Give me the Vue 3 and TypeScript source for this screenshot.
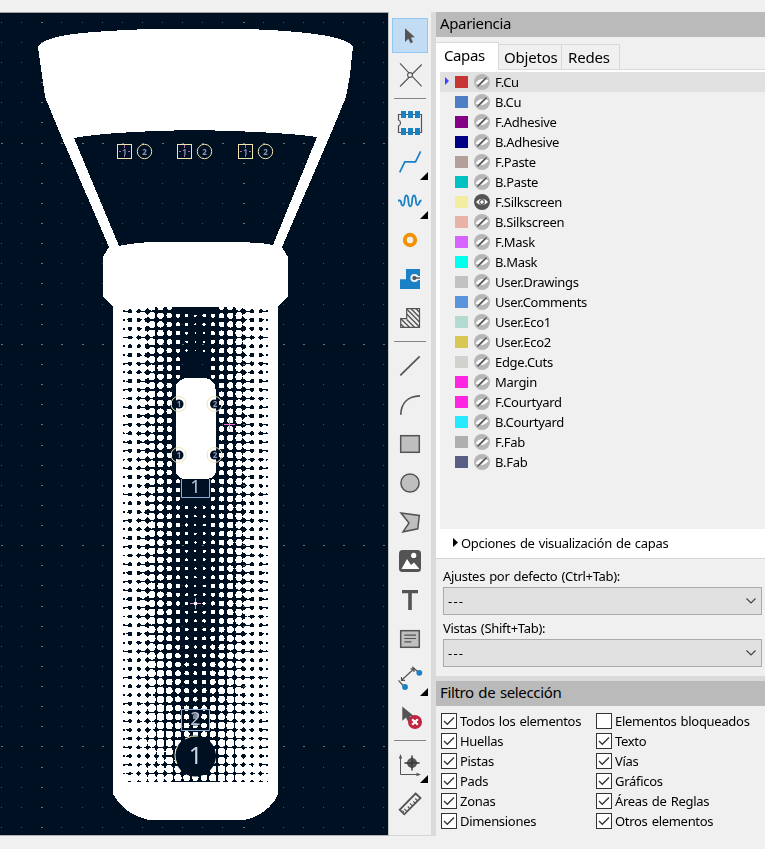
<script setup lang="ts">
interface Layer { name: string; color: string; visible?: boolean }
interface Dot { x: number; y: number; rx: number; ry: number }

const layers: Layer[] = [
  { name: 'F.Cu', color: '#c83434' },
  { name: 'B.Cu', color: '#4d7fc4' },
  { name: 'F.Adhesive', color: '#840084' },
  { name: 'B.Adhesive', color: '#000084' },
  { name: 'F.Paste', color: '#b4a09a' },
  { name: 'B.Paste', color: '#00c2c2' },
  { name: 'F.Silkscreen', color: '#f2eda1', visible: true },
  { name: 'B.Silkscreen', color: '#e8b2a7' },
  { name: 'F.Mask', color: '#d864ff' },
  { name: 'B.Mask', color: '#02ffee' },
  { name: 'User.Drawings', color: '#c2c2c2' },
  { name: 'User.Comments', color: '#5994dc' },
  { name: 'User.Eco1', color: '#b4dbd2' },
  { name: 'User.Eco2', color: '#d8c852' },
  { name: 'Edge.Cuts', color: '#d0d2cd' },
  { name: 'Margin', color: '#ff26e2' },
  { name: 'F.Courtyard', color: '#ff26e2' },
  { name: 'B.Courtyard', color: '#26e9ff' },
  { name: 'F.Fab', color: '#afafaf' },
  { name: 'B.Fab', color: '#585d84' },
]

const filterLeft: string[] = ['Todos los elementos', 'Huellas', 'Pistas', 'Pads', 'Zonas', 'Dimensiones']
const filterRight: string[] = ['Elementos bloqueados', 'Texto', 'Vías', 'Gráficos', 'Áreas de Reglas', 'Otros elementos']

// Toolbar order; '|' is a separator.
const tools: string[] = ['select', 'ratsnest', '|', 'footprint', 'track', 'meander', 'via', 'zone', 'rulearea', '|',
  'line', 'arc', 'rect', 'circle', 'polygon', 'image', 'text', 'textbox', 'dimension', 'delete', '|', 'origin', 'measure']
const flyouts: string[] = ['track', 'meander', 'dimension', 'origin']

// Halftone of the flashlight body: light cells, plus dark knots between the outer cells.
const PITCH = 8.72
const CENTER = 195.4
const dots: Dot[] = []
const knots: { x: number; y: number; r: number }[] = []
for (let row = -1; row < 54; row++) {
  const y = 315.7 + row * PITCH
  const low = Math.max(0, (y - 600) / 180)
  for (let k = -8; k <= 8; k++) {
    const a = Math.abs(k)
    if (row < 0 && a <= 2) continue
    if (y > 352 && y < 505 && a <= 1) continue
    let rx: number
    let ry: number
    if (a === 8) { rx = 5.4; ry = row % 3 === 1 ? 4.5 : 4.0 }
    else if (a === 7) { rx = 4.8; ry = 4.7 }
    else if (a === 6) { rx = 4.7; ry = (row % 3 === 1 ? 4.35 : 3.95) + low * 0.45 }
    else {
      const base = y < 505 ? [0.9, 1.5, 2.2, 2.75, 3.2, 3.6] : [1.2, 1.6, 2.2, 2.8, 3.25, 3.6]
      const gain = [2.0, 1.8, 1.5, 1.2, 1.0, 0.8]
      rx = base[a] + gain[a] * low
      if (y < 352 && a <= 1) rx = Math.max(0.8, rx + 0.3 - row * 0.15)
      ry = rx
    }
    dots.push({ x: CENTER + k * PITCH, y, rx, ry })
  }
  if (row < 53) {
    const radii: [number, number][] = [[5.5, 2.5 - low * 0.5], [6.5, 2.1 - low * 0.5], [7.5, 2.1 - low * 0.3], [8.2, 1.1]]
    for (const [n, r] of radii) {
      knots.push({ x: CENTER - n * PITCH, y: y + PITCH / 2, r }, { x: CENTER + n * PITCH, y: y + PITCH / 2, r })
    }
  }
}

const grid: { x: number; y: number; major: boolean }[] = []
for (let i = 0; i < 20; i++) {
  for (let j = 0; j < 41; j++) {
    grid.push({
      x: Math.floor(1.5 + i * 20.13), y: Math.floor(22.3 + j * 20.13),
      major: i % 10 === 2 || j % 10 === 6,
    })
  }
}

const leds: number[] = [117, 177, 238]
const pads = [
  { x: 178.5, y: 404, n: '1' }, { x: 214.5, y: 404, n: '2' },
  { x: 178.5, y: 455, n: '1' }, { x: 214.5, y: 455, n: '2' },
]
</script>

<template>
  <div class="app">
    <div class="canvas">
      <svg width="388" height="822" viewBox="0 13 388 822">
        <rect y="13" width="388" height="822" fill="#001023" />
        <g fill="#fff" shape-rendering="crispEdges">
          <path fill-rule="evenodd" d="M38 47C42 39 62 35 82 33C105 31 125 30 148 29H245C280 30 315 33 332 37C343 39 350 43 353 46L350 75L346 97L332 131L282 247L288 257V296L286 299L278 306V794C274 805 261 817 244 820H149C132 817 119 806 113 794V306L105 299L103 296V257L109 247L62 138L45 97L42 75ZM74 138C100 133 145 131 195 130C245 131 290 133 317 137L273 245C265 243 254 243 243 242H150C139 243 126 244 119 246Z" />
          <rect x="123" y="307" width="145" height="475" fill="#001023" />
          <ellipse v-for="(d, i) in dots" :key="i" :cx="d.x" :cy="d.y" :rx="d.rx" :ry="d.ry" />
          <circle v-for="(k, i) in knots" :key="'k' + i" :cx="k.x" :cy="k.y" :r="k.r" fill="#001023" />
          <path d="M175.500 391Q176 379 187 378H205Q215 379 216 391V472Q214 479 205 479H187Q177 479 176 472Z" />
        </g>
        <rect v-for="(g, i) in grid" :key="'g' + i" :x="g.x" :y="g.y" :width="g.major ? 2 : 1" height="1"
          :fill="g.major ? '#68726f' : '#47525a'" class="grid-dot" />

        <g v-for="x in leds" :key="x" fill="none" stroke="#f2e4ad">
          <rect :x="x + 0.5" y="144.500" width="14" height="14" shape-rendering="crispEdges" />
          <circle :cx="x + 27.5" cy="151.500" r="7.200" />
          <path :d="`M${x + 7.5} 145v3M${x + 7.5} 155v2M${x + 2} 151.500h2M${x + 11} 151.500h2`" stroke="#b465b1" />
          <text :x="x + 7.500" y="154.500" class="pad-no">1</text>
          <text :x="x + 27.500" y="154.500" class="pad-no">2</text>
        </g>

        <g v-for="(p, i) in pads" :key="'p' + i">
          <circle :cx="p.x + (p.n === '1' ? 0.5 : 0)" :cy="p.y" r="4.500" fill="#001023" />
          <circle :cx="p.x" :cy="p.y" r="7.500" fill="none" stroke="#f1e4b5" />
          <text :x="p.x + 0.500" :y="p.y + 3" class="pad-no">{{ p.n }}</text>
        </g>
        <path d="M181.500 479V497.500H209.500V479" fill="#001023" stroke="#8eaad5" />
        <path d="M181.500 709.500H209.500V730.500H181.500Z" fill="none" stroke="#8eaad5" />
        <path d="M191 711H200V726H191Z" fill="#001023" opacity="0.5" />
        <circle cx="195.500" cy="756" r="20.500" fill="#001023" />
        <path d="M178 745A20.500 20.500 0 0 0 177 764M185 739A20 20 0 0 1 198 736" fill="none" stroke="#f1e4b5" />
        <text x="195.500" y="493" class="big-no small">1</text>
        <text x="195.500" y="725" class="big-no small">2</text>
        <text x="195.500" y="764" class="big-no">1</text>
        <path d="M224 424.500H235M229.500 420V429" stroke="#ee70d8" />
        <path d="M190 603.500H201M195.500 598V609" stroke="#ef86df" />
        <rect x="194" y="602" width="3" height="3" fill="#fff" />
      </svg>
    </div>

    <div class="toolbar">
      <template v-for="(t, i) in tools" :key="i">
        <div v-if="t === '|'" class="sep"></div>
        <div v-else class="tool" :class="{ active: t === 'select' }">
          <svg width="36" height="39" viewBox="0 0 36 39" fill="none" stroke="#545454" stroke-width="1.500">
            <path v-if="t === 'select'" d="M13 12.300V26L16.300 22.800L18.600 27.300L21 26L18.800 21.500L22.800 21.200Z" fill="#545454" stroke="none" />
            <g v-else-if="t === 'ratsnest'" stroke-width="1.100">
              <path d="M8 8.300L29.700 31.300M29.700 9.500L8 31.500" /><circle cx="18" cy="20" r="2.400" fill="#f5f5f5" />
            </g>
            <g v-else-if="t === 'footprint'">
              <path d="M6.500 11.500H29.500V29.500H6.500V23Q8.500 22.500 8.500 20T6.500 17Z" stroke-width="1.200" />
              <path d="M9 8h5v7H9zM16 8h5v7h-5zM23 8h5v7h-5zM9 25h5v7H9zM16 25h5v7h-5zM23 25h5v7h-5z" fill="#1a81c4" stroke="none" />
            </g>
            <path v-else-if="t === 'track'" d="M7.700 30.300L12.800 19.800H23.500L28.600 9.300" stroke="#1a81c4" stroke-width="1.700" />
            <path v-else-if="t === 'meander'" d="M6 19.500H7.500C10 19.500 8.500 24.500 10.800 24.500C13.800 24.500 11.500 14.500 14.500 14.500C17.500 14.500 15.300 25.300 18.200 25.300C21.200 25.300 19 14.500 22 14.500C25 14.500 22.800 24 25.500 24C27.800 24 26.500 19.500 29.500 19.500" stroke="#1a81c4" stroke-width="1.800" />
            <circle v-else-if="t === 'via'" cx="18" cy="20" r="5.200" stroke="#f39200" stroke-width="3.900" />
            <g v-else-if="t === 'zone'">
              <path d="M8 20.300H14V10H28V30H8Z" fill="#1a81c4" stroke="none" />
              <circle cx="22.500" cy="19" r="3.100" stroke="#f0f0f0" stroke-width="2" />
              <path d="M22.500 19H28.500" stroke="#f0f0f0" stroke-width="4" /><circle cx="22.500" cy="19" r="2" fill="#545454" stroke="none" />
              <path d="M22.500 19H28" stroke-width="1.400" />
            </g>
            <g v-else-if="t === 'rulearea'">
              <path d="M8.700 20.700H14.700V10.700H27.500V29.300H8.700Z" stroke-width="1.200" />
              <path d="M8.700 26L12.200 29.300M9 21L17.500 29.300M14.700 21.500L22.500 29.300M14.700 16L27.500 29M14.700 11L27.500 24M19 10.700L27.500 19.200M24 10.700L27.500 14.200" stroke-width="1.400" />
            </g>
            <path v-else-if="t === 'line'" d="M8.300 29.300L27.700 10.300" stroke-width="1.700" />
            <path v-else-if="t === 'arc'" d="M8.800 29.700C9 18 16 11.200 28 10.800" stroke-width="1.700" />
            <rect v-else-if="t === 'rect'" x="8.700" y="11.700" width="18.600" height="16.600" fill="#bfbfbf" />
            <circle v-else-if="t === 'circle'" cx="18" cy="20" r="9.100" fill="#bfbfbf" />
            <path v-else-if="t === 'polygon'" d="M9 11L27.300 13.500L25.800 26.800L11 29.800L17 21Z" fill="#bfbfbf" />
            <g v-else-if="t === 'image'" stroke="none">
              <rect x="7" y="9" width="22" height="22" rx="3.500" fill="#545454" />
              <path d="M9.500 28L15 18L19 24L22 21.500L27.500 28Z" fill="#fff" /><circle cx="21.700" cy="14.400" r="2.600" fill="#fff" />
            </g>
            <path v-else-if="t === 'text'" d="M10 10H26V13.300H19.800V30H16.200V13.300H10Z" fill="#545454" stroke="none" />
            <g v-else-if="t === 'textbox'">
              <rect x="8.700" y="11.700" width="18.600" height="16.600" fill="#bfbfbf" />
              <path d="M12.300 16.200H24M12.300 19.500H24M12.300 22.800H19.500" stroke-width="1.200" />
            </g>
            <g v-else-if="t === 'dimension'" stroke-width="1.200">
              <path d="M9.500 22.300L22 10.800M20.300 8.700L25.500 13.500M6.500 22.300L11 27.500M9.500 19V22.300H13M18.500 10.800H22V14" />
              <circle cx="27.300" cy="14.800" r="2.900" fill="#1a81c4" stroke="none" /><circle cx="13" cy="29" r="2.900" fill="#1a81c4" stroke="none" />
            </g>
            <g v-else-if="t === 'delete'" stroke="none">
              <path d="M10.300 9.500V23.800L14 20.600L16.500 25.500L20 24L17.500 19.500L22 19.200Z" fill="#545454" />
              <circle cx="23" cy="25" r="7" fill="#bf2641" />
              <path d="M20.200 22.200L25.800 27.800M25.800 22.200L20.200 27.800" stroke="#fff" stroke-width="2.200" />
            </g>
            <g v-else-if="t === 'origin'">
              <path d="M8.500 12V29.500H26" stroke-width="1" /><path d="M8.500 9L10.200 13.500H6.800ZM29 29.500L24.500 27.800V31.200Z" fill="#545454" stroke="none" />
              <circle cx="20" cy="18" r="5" fill="#545454" stroke="none" /><path d="M12.500 18H27.500M20 10.500V25.500" stroke="#303030" stroke-width="1.400" />
              <path d="M16 17.200H19.200V14M20.800 22V18.800H24" stroke="#777" stroke-width=".5" />
            </g>
            <g v-else-if="t === 'measure'">
              <path d="M23.600 9.500L28.500 14L12.300 30.300L7.700 25.800Z" stroke-width="1.800" />
              <path d="M11.800 28.300L10.500 26.500M14.800 27.300L12.300 24.800M17.300 24.300L15.800 22.500M20.500 21.800L18 19.300M22.800 19L21.300 17.300M25.500 16.800L23.300 14.500" stroke-width="1.200" />
            </g>
            <path v-if="flyouts.includes(t)" d="M36 30V38H28Z" fill="#000" stroke="none" />
          </svg>
        </div>
      </template>
    </div>

    <div class="splitter"></div>

    <div class="panel">
      <div class="heading">Apariencia</div>
      <div class="tabs">
        <div class="tab current">Capas</div>
        <div class="tab objects">Objetos</div>
        <div class="tab nets">Redes</div>
      </div>
      <div class="page">
        <div class="layers">
          <div v-for="(l, i) in layers" :key="l.name" class="layer" :class="{ selected: i === 0 }">
            <svg class="marker" width="15" height="20" viewBox="0 0 15 20"><path v-if="i === 0" d="M5 5L9 9L5 13Z" fill="#4040ff" /></svg>
            <span class="swatch" :style="{ background: l.color }"></span>
            <svg width="16" height="16" viewBox="0 0 16 16">
              <template v-if="l.visible">
                <circle cx="8" cy="8" r="8" fill="#545454" /><path d="M2 8Q8 1.500 14 8Q8 14.500 2 8Z" fill="#fff" />
                <circle cx="8" cy="8" r="2.300" fill="#fff" stroke="#545454" stroke-width="1.200" />
              </template>
              <template v-else>
                <circle cx="8" cy="8" r="8" fill="#b6b6b6" /><path d="M1.500 9.500Q6 2.500 14.500 6.500Q10 13.500 1.500 9.500Z" fill="#fff" />
                <path d="M3.300 12.700L12.700 3.300" stroke="#d0d0d0" stroke-width="2.600" /><path d="M3.500 12.500L12.500 3.500" stroke="#4c4c4c" stroke-width="1.500" />
              </template>
            </svg>
            <span class="layer-name">{{ l.name }}</span>
          </div>
        </div>
        <div class="options">
          <svg width="6" height="10" viewBox="0 0 6 10"><path d="M0 0L5 4.500L0 9Z" fill="#000" /></svg>
          <span>Opciones de visualización de capas</span>
        </div>
      </div>
      <div class="presets">
        <div class="label">Ajustes por defecto (Ctrl+Tab):</div>
        <div class="select"><span>---</span><svg width="10" height="6" viewBox="0 0 10 6"><path d="M.5 .5L5 5L9.500 .5" fill="none" stroke="#444" stroke-width="1.200" /></svg></div>
        <div class="label second">Vistas (Shift+Tab):</div>
        <div class="select"><span>---</span><svg width="10" height="6" viewBox="0 0 10 6"><path d="M.5 .5L5 5L9.500 .5" fill="none" stroke="#444" stroke-width="1.200" /></svg></div>
      </div>
      <div class="heading">Filtro de selección</div>
      <div class="filters">
        <div v-for="(col, c) in [filterLeft, filterRight]" :key="c" class="filter-col">
          <div v-for="(f, i) in col" :key="f" class="check">
            <span class="box"><svg v-if="!(c === 1 && i === 0)" width="14" height="14" viewBox="0 0 14 14"><path d="M2 7L5.300 10.300L12 3.500" fill="none" stroke="#333" stroke-width="1.300" /></svg></span>
            <span>{{ f }}</span>
          </div>
        </div>
      </div>
    </div>
  </div>
</template>

<style>
body { background: #f0f0f0; overflow: hidden; }
</style>

<style scoped>
.app {
  display: flex; box-sizing: border-box; width: 765px; height: 849px; padding: 12px 0 13px;
  background: #f0f0f0; color: #000; font: 13px/20px "Noto Sans", "Open Sans", sans-serif;
  letter-spacing: -.3px; word-spacing: 1px; overflow: hidden;
}
.canvas { box-sizing: border-box; width: 389px; height: 824px; border-top: 1px solid #a0a0a0; border-right: 1px solid #c8c8c8; border-bottom: 1px solid #b5b5b5; }
.canvas svg { display: block; }
.grid-dot { mix-blend-mode: lighten; }
.pad-no { font: bold 8px "Noto Sans", sans-serif; fill: #8795b3; stroke: none; text-anchor: middle; letter-spacing: 0; }
.big-no { font: 24px "Noto Sans", sans-serif; fill: #ccd5e5; text-anchor: middle; letter-spacing: 0; }
.big-no.small { font-size: 18px; fill: #b7c3d8; }
.toolbar { width: 42px; box-sizing: border-box; padding: 4px 3px 0; border-bottom: 1px solid #d5d5d5; }
.tool { height: 39px; width: 36px; }
.tool svg { display: block; }
.tool.active { background: linear-gradient(#c1dcf3, #c1dcf3) 1px 3px / 34px 33px no-repeat, linear-gradient(#90c8f6, #90c8f6) 0 2px / 36px 35px no-repeat; }
.sep { height: 9px; margin: 0 2px; background: linear-gradient(#858585, #858585) 0 4px / 100% 1px no-repeat; }
.splitter { width: 5px; background: #dadada; }
.panel { width: 329px; display: flex; flex-direction: column; }
.heading { height: 25px; padding-left: 4px; background: #bababa; font-size: 15px; line-height: 22px; letter-spacing: -.35px; }
.tabs { height: 33px; display: flex; align-items: flex-end; font-size: 15px; letter-spacing: -.2px; box-shadow: inset 0 -1px #dadada; }
.tab { box-sizing: border-box; height: 26px; line-height: 25px; border: 1px solid #d9d9d9; border-left: 0; padding-left: 5px; }
.tab.current { height: 28px; width: 63px; background: #fff; padding-left: 8px; line-height: 24px; border-bottom-color: #fff; letter-spacing: -.4px; }
.tab.objects { width: 63px; }
.tab.nets { width: 58px; padding-left: 6px; }
.page { height: 489px; box-sizing: border-box; padding: 2px 0 0 4px; background: #fff; border-bottom: 1px solid #d5d5d5; }
.layers { height: 457px; background: #f0f0f0; }
.layer { height: 20px; display: flex; align-items: center; }
.layer.selected { background: #e1e1e1; }
.swatch { width: 13px; height: 12px; margin-right: 6px; }
.layer-name { margin-left: 5px; }
.options { height: 27px; display: flex; align-items: center; padding-left: 13px; }
.options svg { margin-right: 2px; }
.presets { height: 122px; box-sizing: border-box; padding: 8px 3px 0 7px; border-bottom: 5px solid #dadada; }
.label { height: 20px; line-height: 18px; }
.label.second { margin-top: 4px; }
.select { box-sizing: border-box; height: 28px; display: flex; align-items: center; justify-content: space-between; border: 1px solid #aaa; background: #e1e1e1; padding: 0 5px 0 4px; letter-spacing: 1.200px; }
.filters { display: flex; padding: 5px 0 0 5px; }
.filter-col { width: 155px; white-space: nowrap; }
.check { display: flex; align-items: center; height: 20px; }
.box { flex: none; box-sizing: border-box; width: 16px; height: 16px; margin-right: 3px; border: 1px solid #333; background: #fff; }
.box svg { display: block; }
</style>
